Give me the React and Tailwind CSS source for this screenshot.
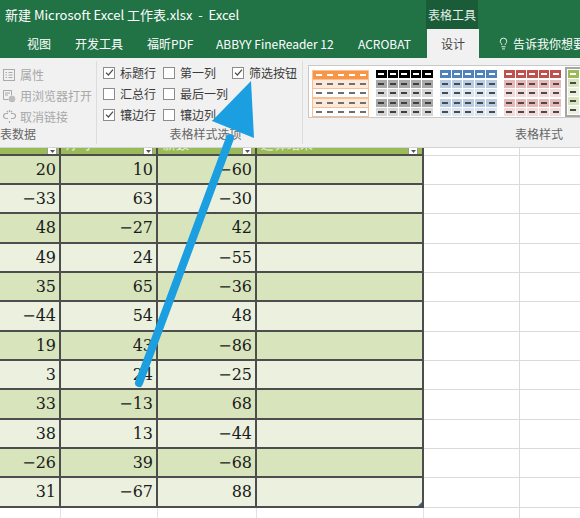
import React from 'react';
import { Lightbulb } from 'lucide-react';

// Ribbon tabs, fixed widths so the labels land where Excel puts them
const TABS = [
  { label: '视图', w: 'w-[48px]' },
  { label: '开发工具', w: 'w-[72px]' },
  { label: '福昕PDF', w: 'w-[69px]' },
  { label: 'ABBYY FineReader 12', w: 'w-[142px]' },
  { label: 'ACROBAT', w: 'w-[69px]' },
];

const ROWS = [
  [20, 10, -60], [-33, 63, -30], [48, -27, 42], [49, 24, -55],
  [35, 65, -36], [-44, 54, 48], [19, 43, -86], [3, 24, -25],
  [33, -13, 68], [38, 13, -44], [-26, 39, -68], [31, -67, 88],
];

const ROW_HEIGHTS = ['h-[29px]', 'h-[29px]', 'h-[30px]'];

const GALLERY = [
  {
    grid: 'gap-x-0 gap-y-px bg-[#f8bf95] p-px',
    head: 'bg-[#f79646]',
    rows: ['bg-[#fde9d9]', 'bg-white', 'bg-[#fde9d9]', 'bg-white'],
    dash: 'bg-[#6f6f6f]',
  },
  {
    grid: 'gap-px bg-white',
    head: 'bg-black',
    rows: ['bg-[#a9a9a9]', 'bg-[#d6d6d6]', 'bg-[#a9a9a9]', 'bg-[#d6d6d6]'],
    dash: 'bg-[#3f3f3f]',
  },
  {
    grid: 'gap-px bg-white',
    head: 'bg-[#4f81bd]',
    rows: ['bg-[#b8cce4]', 'bg-[#dce6f1]', 'bg-[#b8cce4]', 'bg-[#dce6f1]'],
    dash: 'bg-[#4a4a4a]',
  },
  {
    grid: 'gap-px bg-white',
    head: 'bg-[#c0504d]',
    rows: ['bg-[#e6b8b7]', 'bg-[#f2dcdb]', 'bg-[#e6b8b7]', 'bg-[#f2dcdb]'],
    dash: 'bg-[#4a4a4a]',
  },
  {
    grid: 'gap-px bg-white',
    head: 'bg-[#9bbb59]',
    rows: ['bg-[#d8e4bc]', 'bg-[#ebf1de]', 'bg-[#d8e4bc]', 'bg-[#ebf1de]'],
    dash: 'bg-[#4a4a4a]',
    selected: true,
  },
];

const fmt = (n) => (n < 0 ? `\u2212${Math.abs(n)}` : `${n}`);

const StyleThumb = ({ style }) => {
  const rows = [style.head, ...style.rows];
  const thumb = (
    <div className={`grid grid-cols-5 w-[57px] shrink-0 ${style.grid}`}>
      {rows.map((bg, r) =>
        [0, 1, 2, 3, 4].map((c) => (
          <div key={`${r}-${c}`} className={`h-[8px] flex items-center justify-center ${bg}`}>
            <div className={`w-[6px] h-[2px] ${r === 0 ? 'bg-white' : style.dash}`} />
          </div>
        ))
      )}
    </div>
  );
  if (!style.selected) return thumb;
  return (
    <div className="-ml-[3px] -mt-[3px] border-2 border-[#a6a6a6] p-px shrink-0">{thumb}</div>
  );
};

const Checkbox = ({ checked, label }) => (
  <div className="h-[21px] flex items-center whitespace-nowrap">
    <span className="w-[12px] h-[12px] shrink-0 border border-[#8d8d8d] bg-white flex items-center justify-center">
      {checked && (
        <svg width="9" height="9" viewBox="0 0 9 9">
          <path d="M1 4.6 L3.4 7 L8 1.6" fill="none" stroke="#4a4a4a" strokeWidth="1.2" />
        </svg>
      )}
    </span>
    <span className="ml-[5px] text-[12px] leading-none text-[#3c3c3c]">{label}</span>
  </div>
);

const PropsIcon = () => (
  <svg width="12" height="12" viewBox="0 0 12 12" fill="none" stroke="#aaaaaa">
    <rect x="0.5" y="0.5" width="11" height="11" />
    <path d="M2.5 3.5h1.5M5.5 3.5h4M2.5 6h1.5M5.5 6h4M2.5 8.5h1.5M5.5 8.5h4" />
  </svg>
);

const BrowserIcon = () => (
  <svg width="13" height="13" viewBox="0 0 13 13" fill="none" stroke="#aaaaaa">
    <path d="M0.5 0.5h8v5M0.5 0.5v9h5" />
    <path d="M2 3h5M2 5h3" />
    <circle cx="9" cy="9" r="3.3" fill="#bdbdbd" stroke="none" />
  </svg>
);

const UnlinkIcon = () => (
  <svg width="13" height="13" viewBox="0 0 13 13" fill="none" stroke="#aaaaaa" strokeWidth="1.2">
    <path d="M5 3.5H3a2.5 2.5 0 0 0 0 5h2M8 3.5h2a2.5 2.5 0 0 1 0 5H8" />
    <path d="M6.5 0v2M4 0.8l1 1.5M9 0.8l-1 1.5M6.5 13v-2" />
  </svg>
);

const DropButton = () => (
  <span className="w-[10px] h-[7px] shrink-0 bg-white border-x border-b border-[#9a9a9a] flex items-end justify-center pb-px">
    <svg width="5" height="3" viewBox="0 0 5 3">
      <path d="M0 0h5L2.5 3z" fill="#555" />
    </svg>
  </span>
);

const HeaderRow = () => (
  <div className="flex h-[8px] shrink-0">
    <div className="w-[61px] bg-[#9bbb59] border-r-2 border-b-2 border-[#4d4d4d] flex justify-end pr-[2px] overflow-hidden">
      <DropButton />
    </div>
    <div className="w-[97px] bg-[#9bbb59] border-r-2 border-b-2 border-[#4d4d4d] flex justify-between pl-[5px] pr-[3px] overflow-hidden">
      <span className="-mt-[10px] text-[13px] leading-[13px] text-[#eef3e2]">序号</span>
      <DropButton />
    </div>
    <div className="w-[99px] bg-[#9bbb59] border-r-2 border-b-2 border-[#4d4d4d] flex justify-between pl-[5px] pr-[3px] overflow-hidden">
      <span className="-mt-[10px] text-[13px] leading-[13px] text-[#eef3e2]">新数</span>
      <DropButton />
    </div>
    <div className="w-[167px] bg-[#9bbb59] border-r-2 border-b-2 border-[#4d4d4d] flex justify-between pl-[4px] pr-[4px] overflow-hidden">
      <span className="-mt-[10px] text-[13px] leading-[13px] text-[#eef3e2]">运算结果</span>
      <DropButton />
    </div>
    <div className="w-[96px] bg-white border-r border-b border-[#dadada]" />
    <div className="w-[60px] bg-white border-b border-[#dadada]" />
  </div>
);

const DataRow = ({ values, index }) => {
  const bg = index % 2 === 0 ? 'bg-[#d8e4bc]' : 'bg-[#ebf1de]';
  const h = ROW_HEIGHTS[index % 3];
  const last = index === ROWS.length - 1;
  return (
    <div className={`flex shrink-0 ${h}`}>
      <div className={`w-[61px] ${bg} border-r-2 border-b-2 border-[#4d4d4d] flex items-center justify-end pr-[3px]`}>
        {fmt(values[0])}
      </div>
      <div className={`w-[97px] ${bg} border-r-2 border-b-2 border-[#4d4d4d] flex items-center justify-end pr-[3px]`}>
        {fmt(values[1])}
      </div>
      <div className={`w-[99px] ${bg} border-r-2 border-b-2 border-[#4d4d4d] flex items-center justify-end pr-[3px]`}>
        {fmt(values[2])}
      </div>
      <div className={`relative w-[167px] ${bg} border-r-2 border-b-2 border-[#4d4d4d]`}>
        {last && (
          <span className="absolute right-0 bottom-0 w-0 h-0 border-l-[4px] border-l-transparent border-b-[4px] border-b-[#3a5a8a]" />
        )}
      </div>
      <div className="w-[96px] bg-white border-r border-b border-[#dadada]" />
      <div className="w-[60px] bg-white border-b border-[#dadada]" />
    </div>
  );
};

const App = () => {
  return (
    <div className="relative w-[580px] h-[518px] overflow-hidden bg-white font-['Noto_Sans_CJK_SC',sans-serif] flex flex-col">
      {/* Title bar */}
      <div className="h-[29px] shrink-0 bg-[#217346] flex items-stretch text-white">
        <div className="flex-1 flex items-center pl-[5px] text-[13px] leading-none whitespace-pre">
          新建 Microsoft Excel 工作表.xlsx  -  Excel
        </div>
        <div className="w-[52px] shrink-0 bg-[#1a5c37] flex items-center justify-center text-[12px] leading-none text-[#e4efe8]">
          表格工具
        </div>
        <div className="w-[102px] shrink-0" />
      </div>

      {/* Tabs */}
      <div className="h-[29px] shrink-0 bg-[#217346] flex items-stretch text-white text-[12px] leading-none pl-[27px] whitespace-nowrap overflow-hidden">
        {TABS.map((t) => (
          <div key={t.label} className={`${t.w} shrink-0 flex items-center`}>
            {t.label}
          </div>
        ))}
        <div className="w-[52px] shrink-0 bg-[#f1f1f1] flex items-center justify-center text-[#444444]">设计</div>
        <div className="shrink-0 flex items-center pl-[18px] gap-[3px]">
          <Lightbulb size={13} strokeWidth={1.6} />
          <span>告诉我你想要做什么</span>
        </div>
      </div>

      {/* Ribbon */}
      <div className="h-[90px] shrink-0 bg-[#f1f1f1] border-b border-[#d4d4d4] flex">
        {/* 外部表数据 */}
        <div className="w-[97px] shrink-0 flex flex-col pt-[4px] pb-[3px] border-r border-[#dcdcdc] my-[3px] overflow-hidden">
          <div className="h-[21px] flex items-center pl-[3px] gap-[5px] text-[12px] leading-none text-[#a8a8a8] whitespace-nowrap">
            <PropsIcon />
            <span>属性</span>
          </div>
          <div className="h-[21px] flex items-center pl-[3px] gap-[4px] text-[12px] leading-none text-[#a8a8a8] whitespace-nowrap">
            <BrowserIcon />
            <span>用浏览器打开</span>
          </div>
          <div className="h-[21px] flex items-center pl-[3px] gap-[4px] text-[12px] leading-none text-[#a8a8a8] whitespace-nowrap">
            <UnlinkIcon />
            <span>取消链接</span>
          </div>
          <div className="mt-auto text-[12px] leading-[14px] text-[#666666]">表数据</div>
        </div>

        {/* 表格样式选项 */}
        <div className="w-[206px] shrink-0 flex flex-col pt-[1px] pb-[3px] border-r border-[#dcdcdc] my-[3px]">
          <div className="flex pl-[6px]">
            <div className="w-[60px] flex flex-col">
              <Checkbox checked label="标题行" />
              <Checkbox label="汇总行" />
              <Checkbox checked label="镶边行" />
            </div>
            <div className="w-[69px] flex flex-col">
              <Checkbox label="第一列" />
              <Checkbox label="最后一列" />
              <Checkbox label="镶边列" />
            </div>
            <div className="flex flex-col">
              <Checkbox checked label="筛选按钮" />
            </div>
          </div>
          <div className="mt-auto text-center pl-[12px] text-[12px] leading-[14px] text-[#666666]">表格样式选项</div>
        </div>

        {/* 表格样式 */}
        <div className="flex-1 flex flex-col overflow-hidden pb-[6px]">
          <div className="ml-[5px] mt-[7px] h-[53px] border-y border-l border-[#c8c8c8] bg-white flex pl-[3px] pt-[4px] gap-[7px]">
            {GALLERY.map((s, i) => (
              <StyleThumb key={i} style={s} />
            ))}
          </div>
          <div className="mt-auto text-right pr-[17px] text-[12px] leading-[14px] text-[#666666]">表格样式</div>
        </div>
      </div>

      {/* Sheet */}
      <div className="flex flex-col font-['DejaVu_Serif',serif] text-[16px] leading-none text-[#1c1c1c]">
        <HeaderRow />
        {ROWS.map((r, i) => (
          <DataRow key={i} values={r} index={i} />
        ))}
        <div className="flex h-[12px] shrink-0">
          <div className="w-[61px] border-r border-[#e2e2e2]" />
          <div className="w-[97px] border-r border-[#e2e2e2]" />
          <div className="w-[99px] border-r border-[#e2e2e2]" />
          <div className="w-[167px] border-r border-[#e2e2e2]" />
          <div className="w-[96px] border-r border-[#dadada]" />
          <div className="w-[60px]" />
        </div>
      </div>

      {/* Blue annotation arrow over the screenshot */}
      <svg className="absolute inset-0 pointer-events-none" width="580" height="518" viewBox="0 0 580 518">
        <line x1="139" y1="383" x2="230" y2="138" stroke="#1b9fe1" strokeWidth="8" strokeLinecap="round" />
        <polygon points="251,81 212,121 254,138" fill="#1b9fe1" />
      </svg>
    </div>
  );
};

export default App;
